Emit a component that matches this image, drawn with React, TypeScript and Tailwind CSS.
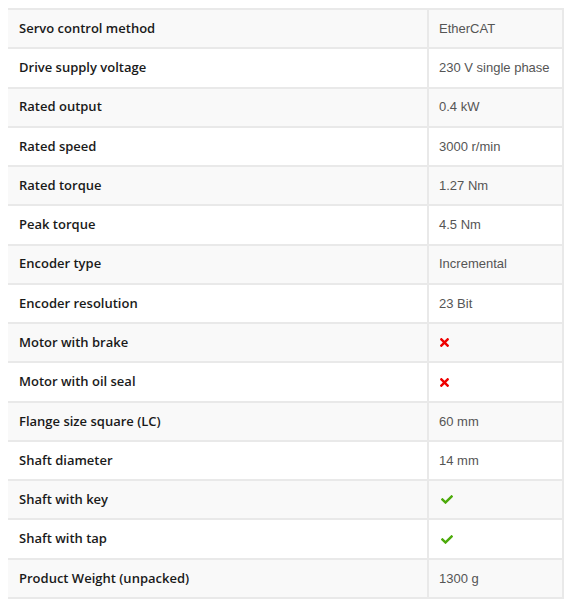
import React from "react";

const rows: [string, string | "x" | "v"][] = [
  ["Servo control method", "EtherCAT"],
  ["Drive supply voltage", "230 V single phase"],
  ["Rated output", "0.4 kW"],
  ["Rated speed", "3000 r/min"],
  ["Rated torque", "1.27 Nm"],
  ["Peak torque", "4.5 Nm"],
  ["Encoder type", "Incremental"],
  ["Encoder resolution", "23 Bit"],
  ["Motor with brake", "x"],
  ["Motor with oil seal", "x"],
  ["Flange size square (LC)", "60 mm"],
  ["Shaft diameter", "14 mm"],
  ["Shaft with key", "v"],
  ["Shaft with tap", "v"],
  ["Product Weight (unpacked)", "1300 g"],
];

function Times() {
  return (
    <svg width="9" height="9" viewBox="0 0 352 352" className="block">
      <path
        fill="#ee0000"
        transform="translate(0,-80)"
        d="M242.72 256l100.07-100.07c12.28-12.28 12.28-32.19 0-44.48l-22.24-22.240c-12.28-12.28-32.19-12.28-44.48 0L176 189.28 75.93 89.21c-12.28-12.28-32.19-12.28-44.48 0L9.21 111.45c-12.28 12.28-12.28 32.19 0 44.48L109.28 256 9.21 356.07c-12.28 12.28-12.28 32.19 0 44.48l22.24 22.24c12.28 12.28 32.2 12.28 44.48 0L176 322.72l100.07 100.07c12.28 12.28 32.2 12.28 44.48 0l22.24-22.24c12.28-12.28 12.28-32.19 0-44.48L242.72 256z"
      />
    </svg>
  );
}

function Check() {
  return (
    <svg width="12" height="9" viewBox="0 64 512 384" className="block">
      <path
        fill="#4caa0a"
        d="M173.898 439.404l-166.4-166.4c-9.997-9.997-9.997-26.206 0-36.204l36.203-36.204c9.997-9.998 26.207-9.998 36.204 0L192 312.69 432.095 72.596c9.997-9.997 26.207-9.997 36.204 0l36.203 36.204c9.997 9.997 9.997 26.206 0 36.204l-294.4 294.401c-9.998 9.997-26.207 9.997-36.204-.001z"
      />
    </svg>
  );
}

export default function App() {
  return (
    <div className="w-[567px] h-[600px] bg-white pt-[8px] pl-[8px] overflow-hidden">
      <div className="w-[556px] border-t-2 border-[#e9e9e9]">
        {rows.map(([label, value], i) => (
          <div
            key={label}
            className={`flex h-[39.27px] border-b-2 border-[#e9e9e9] ${i % 2 === 0 ? "bg-[#f9f9f9]" : "bg-white"}`}
          >
            <div className="w-[421px] flex items-center pl-[11px] border-r-2 border-[#e9e9e9] text-[13px] font-semibold text-[#1a1a1a] [font-family:'Open_Sans',sans-serif]">
              {label}
            </div>
            <div className="flex-1 flex items-center pl-[10px] border-r-2 border-[#e9e9e9] text-[13px] text-[#555] [font-family:'Liberation_Sans',Arial,sans-serif]">
              {value === "x" ? <span className="pl-[1px]"><Times /></span> : value === "v" ? <span className="pl-[2px]"><Check /></span> : value}
            </div>
          </div>
        ))}
      </div>
    </div>
  );
}
